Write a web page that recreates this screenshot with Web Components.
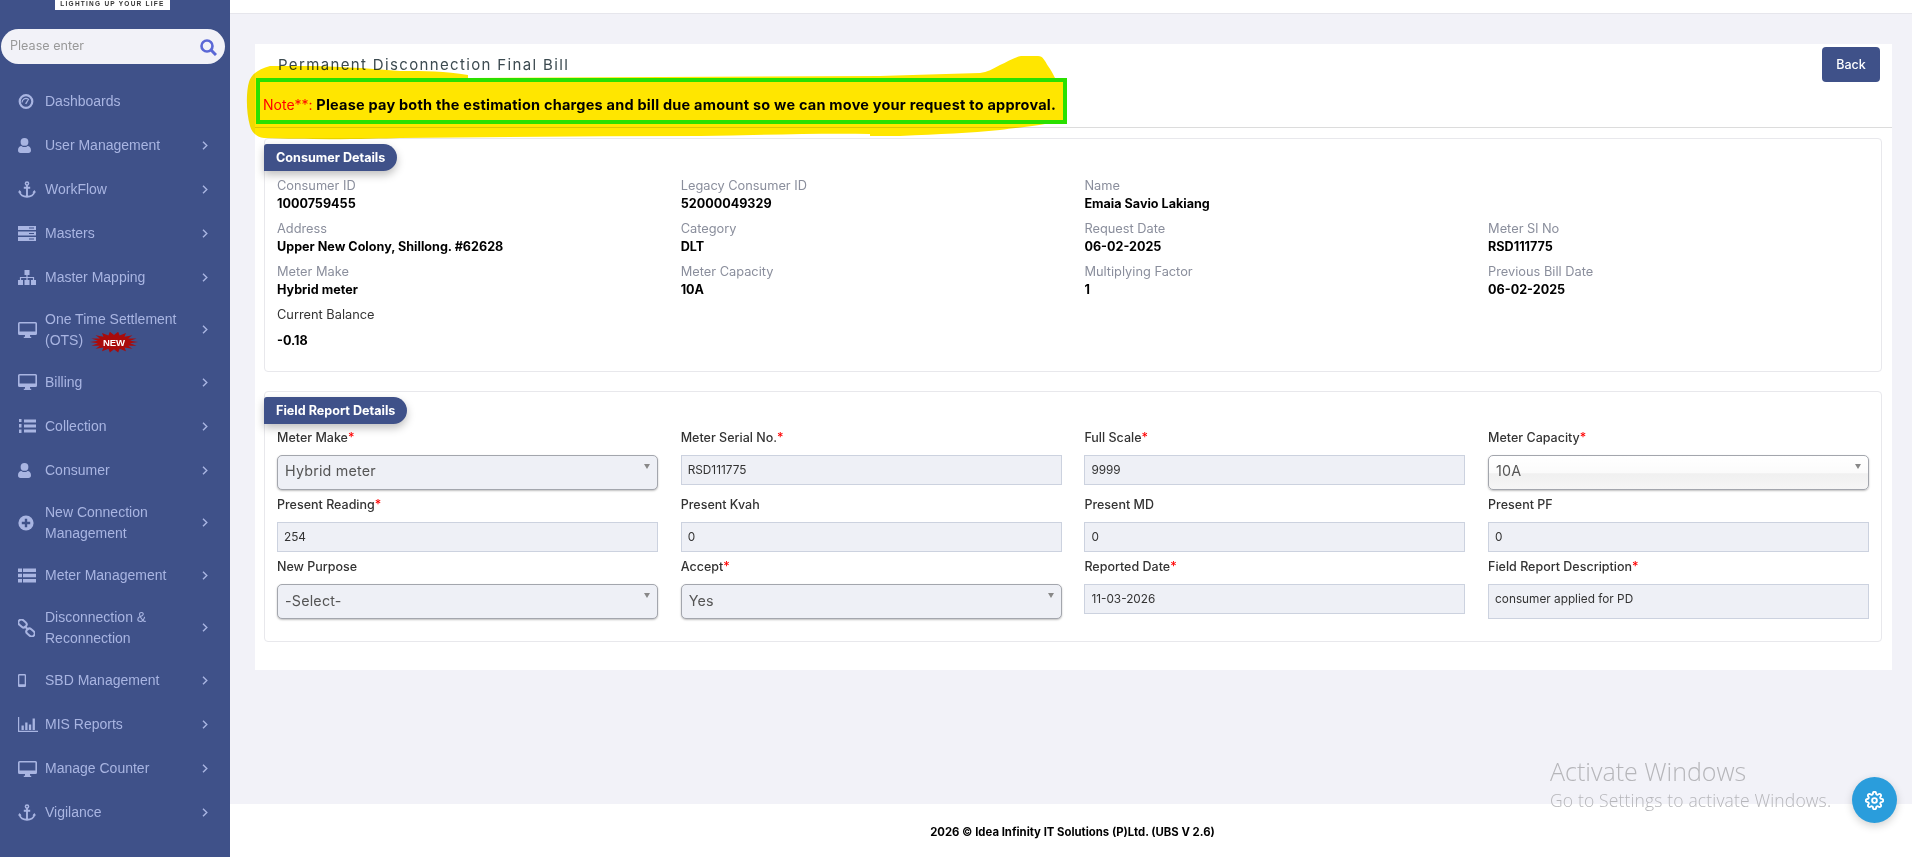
<!DOCTYPE html>
<html>
<head>
<meta charset="utf-8">
<title>Permanent Disconnection Final Bill</title>
<style>
  html, body { margin: 0; height: 100%; overflow: hidden; }
  body { font-family: Inter, "Liberation Sans", sans-serif; background: #f2f2f8; }
</style>
</head>
<body>
<app-shell>
  <app-sidebar slot="side">
    <nav-item icon="dashboard" nochevron>Dashboards</nav-item>
    <nav-item icon="user">User Management</nav-item>
    <nav-item icon="anchor">WorkFlow</nav-item>
    <nav-item icon="server">Masters</nav-item>
    <nav-item icon="sitemap">Master Mapping</nav-item>
    <nav-item icon="desktop">One Time Settlement (OTS) <new-burst></new-burst></nav-item>
    <nav-item icon="desktop">Billing</nav-item>
    <nav-item icon="listol">Collection</nav-item>
    <nav-item icon="user">Consumer</nav-item>
    <nav-item icon="plus">New Connection Management</nav-item>
    <nav-item icon="thlist">Meter Management</nav-item>
    <nav-item icon="link">Disconnection &amp; Reconnection</nav-item>
    <nav-item icon="mobile">SBD Management</nav-item>
    <nav-item icon="chart">MIS Reports</nav-item>
    <nav-item icon="desktop">Manage Counter</nav-item>
    <nav-item icon="anchor">Vigilance</nav-item>
  </app-sidebar>

  <page-card heading="Permanent Disconnection Final Bill">
    <span slot="note"><b class="n">Note**:</b> Please pay both the estimation charges and bill due amount so we can move your request to approval.</span>

    <info-section heading="Consumer Details" class="details">
      <detail-item label="Consumer ID">1000759455</detail-item>
      <detail-item label="Legacy Consumer ID">52000049329</detail-item>
      <detail-item label="Name">Emaia Savio Lakiang</detail-item>
      <detail-item></detail-item>
      <detail-item label="Address">Upper New Colony, Shillong. #62628</detail-item>
      <detail-item label="Category">DLT</detail-item>
      <detail-item label="Request Date">06-02-2025</detail-item>
      <detail-item label="Meter Sl No">RSD111775</detail-item>
      <detail-item label="Meter Make">Hybrid meter</detail-item>
      <detail-item label="Meter Capacity">10A</detail-item>
      <detail-item label="Multiplying Factor">1</detail-item>
      <detail-item label="Previous Bill Date">06-02-2025</detail-item>
      <detail-item label="Current Balance" dark>-0.18</detail-item>
    </info-section>

    <info-section heading="Field Report Details" form>
      <form-field label="Meter Make" required kind="select">Hybrid meter</form-field>
      <form-field label="Meter Serial No." required>RSD111775</form-field>
      <form-field label="Full Scale" required>9999</form-field>
      <form-field label="Meter Capacity" required kind="select" glossy>10A</form-field>
      <form-field label="Present Reading" required>254</form-field>
      <form-field label="Present Kvah">0</form-field>
      <form-field label="Present MD">0</form-field>
      <form-field label="Present PF">0</form-field>
      <form-field label="New Purpose" kind="select">-Select-</form-field>
      <form-field label="Accept" required kind="select">Yes</form-field>
      <form-field label="Reported Date" required>11-03-2026</form-field>
      <form-field label="Field Report Description" required tall>consumer applied for PD</form-field>
    </info-section>

    <highlight-mark slot="mark"></highlight-mark>
  </page-card>

  <app-footer slot="footer">2026 © Idea Infinity IT Solutions (P)Ltd. (UBS V 2.6)</app-footer>
</app-shell>
<windows-watermark></windows-watermark>
<settings-fab></settings-fab>

<script>
const UI_FONT = 'Inter, "Liberation Sans", sans-serif';
const NAVY = '#3f5189';

// hand drawn icons, sized 1:1 in px
const ICONS = {
  dashboard: [16, 15, `<circle cx="8" cy="7.5" r="6.3" fill="none" stroke="currentColor" stroke-width="2.2"/><path d="M4 8.500a4 4 0 0 1 6-3.500" fill="none" stroke="currentColor" stroke-width="1.200"/><path d="M7 9.500l3.500-5 .8.500-3 5.200z" fill="currentColor"/>`],
  user: [13, 15, `<circle cx="6.500" cy="3.900" r="3.900" fill="currentColor"/><path d="M0 12.300C0 9.600 1.500 7.900 3.400 7.900c.9.800 2 1.200 3.100 1.200s2.200-.4 3.100-1.200c1.900 0 3.400 1.700 3.400 4.400C13 14 12 15 10.500 15h-8C1 15 0 14 0 12.300z" fill="currentColor"/>`],
  anchor: [18, 17, `<circle cx="9" cy="2.500" r="1.600" fill="none" stroke="currentColor" stroke-width="1.500"/><path d="M9 4v12M5.800 6.800h6.400M1.600 10.500c.4 3.400 3.800 5.200 7.400 5.200s7-1.800 7.400-5.200" fill="none" stroke="currentColor" stroke-width="1.900"/><path d="M0 11.500l1.600-2.600 2 2.600zM14.400 11.500l2-2.600 1.600 2.600z" fill="currentColor"/>`],
  server: [18, 15, `<path d="M0 0h18v4H0zM0 5.500h18v4H0zM0 11h18v4H0z" fill="currentColor"/><path d="M11 1.500h5v1h-5zM11 7h5v1h-5zM11 12.500h5v1h-5z" fill="${NAVY}"/>`],
  sitemap: [18, 15, `<path d="M6.500 0h5v5h-5zM0 10h5v5H0zM6.500 10h5v5h-5zM13 10h5v5h-5z" fill="currentColor"/><path d="M9 5v5M2.500 10V7.500h13V10" fill="none" stroke="currentColor" stroke-width="1.200"/>`],
  desktop: [19, 16, `<path fill-rule="evenodd" d="M1.500 0h16A1.500 1.500 0 0 1 19 1.500v10a1.500 1.500 0 0 1-1.500 1.500h-16A1.500 1.500 0 0 1 0 11.500v-10A1.500 1.500 0 0 1 1.500 0zM1.600 1.600v8h15.800v-8z" fill="currentColor"/><path d="M7 13h5v1.700h1.200V16H5.800v-1.300H7z" fill="currentColor"/>`],
  listol: [18, 16, `<path d="M6 1.500h12v3H6zM6 6.500h12v3H6zM6 11.500h12v3H6z" fill="currentColor"/><path d="M1 1h2.500v3H1zM1 6h2.500v3.500H1zM1 11.500h2.500V15H1z" fill="currentColor"/>`],
  plus: [16, 16, `<circle cx="8" cy="8" r="7.600" fill="currentColor"/><path d="M6.800 3.800h2.400v3h3v2.400h-3v3H6.800v-3h-3V6.800h3z" fill="${NAVY}"/>`],
  thlist: [18, 15, `<path d="M0 .5h4v3.600H0zM5 .5h13v3.600H5zM0 5.700h4v3.600H0zM5 5.700h13v3.600H5zM0 10.900h4v3.600H0zM5 10.900h13v3.600H5z" fill="currentColor"/>`],
  link: [17, 18, `<g fill="none" stroke="currentColor" stroke-width="2"><rect x="0" y="1.500" width="9" height="6" rx="3" transform="rotate(40 4.500 4.500)"/><rect x="8" y="10.500" width="9" height="6" rx="3" transform="rotate(40 12.500 13.500)"/><path d="M6.500 7l4 4"/></g>`],
  mobile: [8, 13, `<path fill-rule="evenodd" d="M1.300 0h5.400C7.400 0 8 .6 8 1.300v10.400C8 12.400 7.400 13 6.700 13H1.300C.6 13 0 12.400 0 11.700V1.300C0 .6.600 0 1.300 0zM1.300 1.600v8.600h5.400V1.600z" fill="currentColor"/>`],
  chart: [20, 15, `<path d="M.6 0v14.400H20" fill="none" stroke="currentColor" stroke-width="1.200"/><path d="M3.500 8.500h2.300V13H3.500zM7.200 5.500h2.300V13H7.200zM10.900 7.500h2.300V13h-2.300zM14.600 1.500h2.300V13h-2.300z" fill="currentColor"/>`]
};

function icon(name) {
  const [w, h, body] = ICONS[name];
  return `<svg width="${w}" height="${h}" viewBox="0 0 ${w} ${h}">${body}</svg>`;
}

class AppShell extends HTMLElement {
  constructor() {
    super();
    this.attachShadow({mode: 'open'}).innerHTML = `
      <style>
        :host { display: grid; grid-template-columns: 230px 1fr; height: 857px; }
        .main { display: flex; flex-direction: column; min-width: 0; height: 857px; }
        .top { height: 13px; background: #fff; border-bottom: 1px solid #e6e6ec; flex: none; }
        .content { flex: 1; padding: 30px 20px 0 25px; }
      </style>
      <slot name="side"></slot>
      <div class="main">
        <div class="top"></div>
        <div class="content"><slot></slot></div>
        <slot name="footer"></slot>
      </div>`;
  }
}

class AppSidebar extends HTMLElement {
  constructor() {
    super();
    this.attachShadow({mode: 'open'}).innerHTML = `
      <style>
        :host { display: block; background: ${NAVY}; height: 857px; overflow: hidden; }
        .logo { width: 115px; height: 10px; margin-left: 55px; background: #fff; overflow: hidden; color: #333;
          font: bold 6.500px/8px "Liberation Sans", sans-serif; letter-spacing: 1.250px; text-align: center; white-space: nowrap; }
        .search { display: flex; align-items: center; justify-content: space-between; margin: 19px 5px 15px 1px; height: 35px;
          background: #f2f2f8; border-radius: 18px; padding: 0 8px 2px 9px; box-sizing: border-box; color: #999; font: 12.600px ${UI_FONT}; }
        .search svg { margin-top: 3px; }
      </style>
      <div class="logo">LIGHTING UP YOUR LIFE</div>
      <div class="search">
        <span>Please enter</span>
        <svg width="17" height="17" viewBox="0 0 17 17"><circle cx="7" cy="7" r="5.500" fill="none" stroke="#5b68d6" stroke-width="2.600"/><path d="M11 11l5 5" stroke="#5b68d6" stroke-width="3"/></svg>
      </div>
      <slot></slot>`;
  }
}

class NavItem extends HTMLElement {
  constructor() {
    super();
    this.attachShadow({mode: 'open'});
  }
  connectedCallback() {
    const chevron = this.hasAttribute('nochevron') ? '' :
      `<svg class="chev" width="6" height="9" viewBox="0 0 6 9"><path d="M1 .8L4.800 4.500 1 8.200" fill="none" stroke="currentColor" stroke-width="1.400"/></svg>`;
    this.shadowRoot.innerHTML = `
      <style>
        :host { display: flex; align-items: center; min-height: 44px; padding: 9.600px 22px 9.600px 18px; box-sizing: border-box;
          color: #a9b5e2; font: 14px/21px "Liberation Sans", sans-serif; }
        .ic { width: 27px; flex: none; display: flex; }
        .label { flex: 1; max-width: 140px; }
        .chev { margin-left: auto; flex: none; }
      </style>
      <span class="ic">${icon(this.getAttribute('icon'))}</span>
      <span class="label"><slot></slot></span>
      ${chevron}`;
  }
}

class NewBurst extends HTMLElement {
  constructor() {
    super();
    // spiky red star behind the word
    const pts = [];
    const spikes = 18;
    for (let i = 0; i < spikes * 2; i++) {
      const a = Math.PI * i / spikes;
      const r = i % 2 ? 0.68 : 1;
      pts.push(`${(50 + 50 * r * Math.cos(a)).toFixed(1)}% ${(50 + 50 * r * Math.sin(a)).toFixed(1)}%`);
    }
    this.attachShadow({mode: 'open'}).innerHTML = `
      <style>
        :host { display: inline-flex; align-items: center; justify-content: center; width: 48px; height: 21px;
          margin: -6px 0 -6px 3px; vertical-align: -1px; background: #a90b0b; color: #fff;
          font: bold 9.500px "Liberation Sans", sans-serif; clip-path: polygon(${pts.join(',')}); }
      </style>NEW`;
  }
}

class PageCard extends HTMLElement {
  constructor() {
    super();
    this.attachShadow({mode: 'open'});
  }
  connectedCallback() {
    this.shadowRoot.innerHTML = `
      <style>
        :host { display: block; position: relative; background: #fff; height: 626px; font-family: ${UI_FONT}; }
        header { height: 84px; box-sizing: border-box; border-bottom: 1px solid #dcdcdc; position: relative; padding: 12px 0 0 23px; }
        h1 { margin: 0; font: 400 15px/18px ${UI_FONT}; letter-spacing: 1.350px; color: #3c4a50; }
        .note { margin: 21px 0 0 -15px; font: 700 14.500px/20px ${UI_FONT}; letter-spacing: .22px; color: #000; white-space: nowrap; }
        .back { position: absolute; right: 12px; top: 3px; width: 58px; height: 35px; display: flex; align-items: center; justify-content: center;
          background: ${NAVY}; color: #fff; border-radius: 4px; font: 500 12.500px ${UI_FONT}; }
        .body { padding: 10px 10px 0 9px; display: flex; flex-direction: column; gap: 19px; }
      </style>
      <header>
        <h1>${this.getAttribute('heading')}</h1>
        <div class="note"><slot name="note"></slot></div>
        <div class="back">Back</div>
      </header>
      <div class="body"><slot></slot></div>
      <slot name="mark"></slot>`;
    const s = this.querySelector('.n');
    if (s) { s.style.color = '#f00'; s.style.fontWeight = '400'; s.style.letterSpacing = '0'; s.style.fontSize = '14px'; }
  }
}

class InfoSection extends HTMLElement {
  constructor() {
    super();
    this.attachShadow({mode: 'open'});
  }
  connectedCallback() {
    const form = this.hasAttribute('form');
    this.shadowRoot.innerHTML = `
      <style>
        :host { display: block; border: 1px solid #e8e8ec; border-radius: 4px; }
        .tab { display: flex; align-items: center; width: fit-content; height: 27px; margin: 5px 0 0 -1px; padding: 0 12px 0 12px;
          background: ${NAVY}; color: #fff; font: 700 12.600px ${UI_FONT}; border-radius: 3px 14px 14px 0; box-shadow: 0 4px 8px rgba(0,0,0,.25); }
        .grid { display: grid; grid-template-columns: repeat(4, 1fr); column-gap: 22.800px; padding: ${form ? '5px' : '6px'} 12px ${form ? '22px' : '21px'} 12px;
          row-gap: ${form ? '6.400px' : '7px'}; }
      </style>
      <div class="tab">${this.getAttribute('heading')}</div>
      <div class="grid"><slot></slot></div>`;
  }
}

class DetailItem extends HTMLElement {
  constructor() {
    super();
    this.attachShadow({mode: 'open'});
  }
  connectedCallback() {
    const dark = this.hasAttribute('dark');
    this.shadowRoot.innerHTML = `
      <style>
        :host { display: block; font-family: ${UI_FONT}; }
        .l { font: 400 12.800px/18px ${UI_FONT}; color: ${dark ? '#333' : '#8a8e9c'}; min-height: 18px; }
        .v { font: 700 12.600px/18px ${UI_FONT}; color: #000; ${dark ? 'margin-top: 8px;' : ''} min-height: 18px; }
      </style>
      <div class="l">${this.getAttribute('label') || ''}</div>
      <div class="v"><slot></slot></div>`;
  }
}

class FormField extends HTMLElement {
  constructor() {
    super();
    this.attachShadow({mode: 'open'});
  }
  connectedCallback() {
    const select = this.getAttribute('kind') === 'select';
    const tall = this.hasAttribute('tall');
    const req = this.hasAttribute('required') ? '<span class="req">*</span>' : '';
    const gloss = this.hasAttribute('glossy');
    const h = select ? 34.500 : tall ? 35 : 30;
    this.shadowRoot.innerHTML = `
      <style>
        :host { display: block; }
        .l { font: 500 12.500px/18px ${UI_FONT}; color: #333; margin-bottom: 8px; }
        .req { color: #f00; }
        .box { box-sizing: border-box; height: ${h}px; display: flex; align-items: ${tall ? 'flex-start' : 'center'}; background: #eef0f6; border: 1px solid #ccd2df;
          padding: ${tall ? '6px' : '0'} 0 0 6px; font: 400 11.800px/16px ${UI_FONT}; color: #333; position: relative; }
        .box.sel { border: 1px solid #a3a6ad; border-radius: 5px; box-shadow: 0 1px 2px rgba(0,0,0,.25); padding: 0 0 2px 7px;
          font-size: 14.300px; color: #555; letter-spacing: .2px; }
        .box.gloss { background: linear-gradient(#fff 0, #fbfbfb 50%, #f0f0f0 54%, #f6f6f6 100%); }
        .arrow { position: absolute; right: 7px; top: 8px; width: 0; height: 0; border: 3px solid transparent; border-top: 5px solid #888; border-bottom: 0; }
      </style>
      <div class="l">${this.getAttribute('label')}${req}</div>
      <div class="box ${select ? 'sel' : ''} ${gloss ? 'gloss' : ''}"><slot></slot>${select ? '<span class="arrow"></span>' : ''}</div>`;
  }
}

class HighlightMark extends HTMLElement {
  constructor() {
    super();
    // marker scribble and green box laid over the card header
    this.attachShadow({mode: 'open'}).innerHTML = `
      <style>
        :host { position: absolute; left: -10px; top: 10px; width: 830px; height: 90px; mix-blend-mode: multiply; pointer-events: none; }
        svg { display: block; }
      </style>
      <svg width="830" height="90" viewBox="0 0 830 90">
        <path fill="#ffe600" d="M25 12C14 15 6 20 4 28 1 38 1 58 5 72c2 7 7 11 14 12 50 2 110 1 136 0 100-1 200-2 300-2 60-1 120-3 170-2v2c14 0 20 0 30 0 40-2 70-3 100-6 15-2 35-4 45-6H822V24H810C808 20 806 16 803 12 800 7 798 2 793 2h-17C770 3 762 8 755 11 748 15 742 18 735 19 700 20 668 21 635 22L223 24V21C200 17 180 17 155 17 120 14 85 12 55 12z"/>
        <rect x="13" y="26" width="807" height="42" fill="none" stroke="#2ae000" stroke-width="4"/>
      </svg>`;
  }
}

class AppFooter extends HTMLElement {
  constructor() {
    super();
    this.attachShadow({mode: 'open'}).innerHTML = `
      <style>
        :host { display: flex; align-items: center; justify-content: center; height: 53px; flex: none; background: #fff; padding: 3px 0 0 3px; box-sizing: border-box;
          color: #000; font: 700 11.350px ${UI_FONT}; }
      </style><slot></slot>`;
  }
}

class WindowsWatermark extends HTMLElement {
  constructor() {
    super();
    this.attachShadow({mode: 'open'}).innerHTML = `
      <style>
        :host { position: fixed; left: 1550px; top: 755px; color: #b6b6ba; font-family: "Open Sans", sans-serif; font-weight: 300; white-space: nowrap; }
        .a { font-size: 25px; line-height: 32px; }
        .b { font-size: 17.500px; line-height: 26px; letter-spacing: .15px; }
      </style>
      <div class="a">Activate Windows</div>
      <div class="b">Go to Settings to activate Windows.</div>`;
  }
}

class SettingsFab extends HTMLElement {
  constructor() {
    super();
    this.attachShadow({mode: 'open'}).innerHTML = `
      <style>
        :host { position: fixed; left: 1852px; top: 777px; width: 45px; height: 46px; border-radius: 50%; background: #2a9ddc;
          display: flex; align-items: center; justify-content: center; box-shadow: 0 3px 8px rgba(0,0,0,.18); }
      </style>
      <svg width="19" height="19" viewBox="0 0 24 24" fill="none" stroke="#fff" stroke-width="2.400"><circle cx="12" cy="12" r="3"/><path d="M19.400 15a1.650 1.650 0 0 0 .33 1.820l.06.06a2 2 0 0 1 0 2.830 2 2 0 0 1-2.830 0l-.06-.06a1.650 1.650 0 0 0-1.820-.33 1.650 1.650 0 0 0-1 1.510V21a2 2 0 0 1-2 2 2 2 0 0 1-2-2v-.09A1.650 1.650 0 0 0 9 19.400a1.650 1.650 0 0 0-1.820.33l-.06.06a2 2 0 0 1-2.830 0 2 2 0 0 1 0-2.830l.06-.06a1.650 1.650 0 0 0 .33-1.820 1.650 1.650 0 0 0-1.510-1H3a2 2 0 0 1-2-2 2 2 0 0 1 2-2h.09A1.650 1.650 0 0 0 4.600 9a1.650 1.650 0 0 0-.33-1.820l-.06-.06a2 2 0 0 1 0-2.830 2 2 0 0 1 2.830 0l.06.06a1.650 1.650 0 0 0 1.820.33H9a1.650 1.650 0 0 0 1-1.510V3a2 2 0 0 1 2-2 2 2 0 0 1 2 2v.09a1.650 1.650 0 0 0 1 1.510 1.650 1.650 0 0 0 1.820-.33l.06-.06a2 2 0 0 1 2.830 0 2 2 0 0 1 0 2.830l-.06.06a1.650 1.650 0 0 0-.33 1.820V9a1.650 1.650 0 0 0 1.510 1H21a2 2 0 0 1 2 2 2 2 0 0 1-2 2h-.09a1.650 1.650 0 0 0-1.510 1z"/></svg>`;
  }
}

customElements.define('app-shell', AppShell);
customElements.define('app-sidebar', AppSidebar);
customElements.define('nav-item', NavItem);
customElements.define('new-burst', NewBurst);
customElements.define('page-card', PageCard);
customElements.define('info-section', InfoSection);
customElements.define('detail-item', DetailItem);
customElements.define('form-field', FormField);
customElements.define('highlight-mark', HighlightMark);
customElements.define('app-footer', AppFooter);
customElements.define('windows-watermark', WindowsWatermark);
customElements.define('settings-fab', SettingsFab);
</script>
</body>
</html>
